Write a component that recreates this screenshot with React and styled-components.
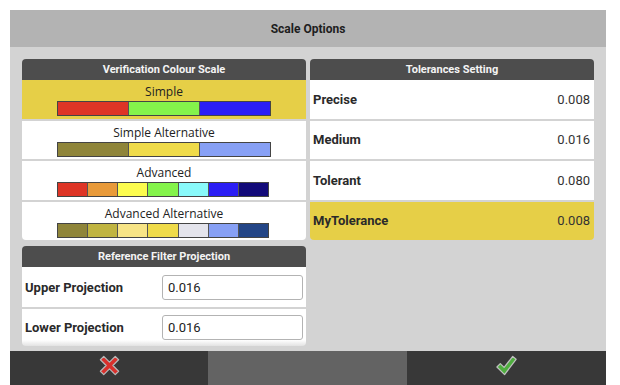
import React from 'react'
import styled, { createGlobalStyle } from 'styled-components'

const GlobalStyle = createGlobalStyle`
  html, body {
    margin:0;
    padding:0;
    background:#fff;
    overflow:hidden;
    font-family:Roboto, "Liberation Sans", sans-serif;
  }
`

const YELLOW = '#e6cf47'

const scales = [
  { name: 'Simple', colors: ['#de3526', '#84f34b', '#2b1ef5'], selected: true },
  { name: 'Simple Alternative', colors: ['#8f853a', '#efdb4a', '#87a0f5'] },
  { name: 'Advanced', colors: ['#de3526', '#e89a3a', '#fcfc4e', '#84f34b', '#89f9fa', '#2b1ef5', '#120a79'] },
  { name: 'Advanced Alternative', colors: ['#8f853a', '#c0b441', '#f7e486', '#efdb4a', '#e4e4ec', '#87a0f5', '#234586'] },
]

const tolerances = [
  { name: 'Precise', value: '0.008' },
  { name: 'Medium', value: '0.016' },
  { name: 'Tolerant', value: '0.080' },
  { name: 'MyTolerance', value: '0.008', selected: true },
]

const CrossIcon = () => (
  <svg width="23" height="23" viewBox="0 0 24 24">
    <path
      d="M6 2.5 L12 8.5 L18 2.5 L21.5 6 L15.5 12 L21.5 18 L18 21.5 L12 15.5 L6 21.5 L2.5 18 L8.5 12 L2.5 6 Z"
      fill="#d9302c"
      stroke="#b8b8b8"
      strokeWidth="1.3"
      strokeLinejoin="round"
    />
  </svg>
)

const CheckIcon = () => (
  <svg width="23" height="23" viewBox="0 0 24 24">
    <path
      d="M2 13.5 L5.5 10 L9.5 14 L18.5 2.5 L22 5.5 L10 21.5 Z"
      fill="#4fae3f"
      stroke="#c0c0c0"
      strokeWidth="1.3"
      strokeLinejoin="round"
    />
  </svg>
)

const App = () => {
  return (
    <>
      <GlobalStyle />
      <Page>
        <Dialog>
          <TitleBar>Scale Options</TitleBar>
          <Body>
            <Column>
              <Panel>
                <PanelHeader>Verification Colour Scale</PanelHeader>
                {scales.map((s) => (
                  <ScaleRow key={s.name} $selected={s.selected}>
                    <ScaleName>{s.name}</ScaleName>
                    <ColorBar $wide={s.colors.length === 3}>
                      {s.colors.map((c, i) => (
                        <Swatch key={i} style={{ background: c }} />
                      ))}
                    </ColorBar>
                  </ScaleRow>
                ))}
              </Panel>
              <Panel>
                <PanelHeader>Reference Filter Projection</PanelHeader>
                <FieldRow>
                  <FieldLabel>Upper Projection</FieldLabel>
                  <FieldInput defaultValue="0.016" />
                </FieldRow>
                <FieldRow $last>
                  <FieldLabel>Lower Projection</FieldLabel>
                  <FieldInput defaultValue="0.016" />
                </FieldRow>
              </Panel>
            </Column>
            <Column>
              <Panel>
                <PanelHeader>Tolerances Setting</PanelHeader>
                {tolerances.map((t) => (
                  <ToleranceRow key={t.name} $selected={t.selected}>
                    <TolName>{t.name}</TolName>
                    <TolValue>{t.value}</TolValue>
                  </ToleranceRow>
                ))}
              </Panel>
            </Column>
          </Body>
          <Footer>
            <FooterButton><CrossIcon /></FooterButton>
            <FooterButton $mid />
            <FooterButton><CheckIcon /></FooterButton>
          </Footer>
        </Dialog>
      </Page>
    </>
  )
}

export default App

const Page = styled.div`
  padding:10px 0 0 10px;
  width:596px;
`

const Dialog = styled.div`
  display:flex;
  flex-direction:column;
  width:596px;
`

const TitleBar = styled.div`
  height:37px;
  background:#b3b3b3;
  display:flex;
  align-items:center;
  justify-content:center;
  font-size:12px;
  font-weight:700;
  color:#1e1e1e;
`

const Body = styled.div`
  height:304px;
  box-sizing:border-box;
  background:#d3d3d3;
  padding:12px 12px 0 12px;
  display:grid;
  grid-template-columns:284px 284px;
  column-gap:4px;
  align-items:start;
  overflow:hidden;
`

const Column = styled.div`
  display:flex;
  flex-direction:column;
  gap:6px;
`

const Panel = styled.div`
  display:flex;
  flex-direction:column;
  gap:2px;
  border-radius:4px;
  overflow:hidden;
`

const PanelHeader = styled.div`
  height:21px;
  margin-bottom:-2px;
  background:#4d4d4d;
  color:#f4f4f4;
  font-size:11px;
  font-weight:700;
  display:flex;
  align-items:center;
  justify-content:center;
`

const ScaleRow = styled.div`
  height:38.5px;
  box-sizing:border-box;
  padding-top:3px;
  background:${(p) => (p.$selected ? YELLOW : '#fff')};
  display:flex;
  flex-direction:column;
  align-items:center;
`

const ScaleName = styled.div`
  font-family:"Open Sans", "Noto Sans", sans-serif;
  font-size:12px;
  line-height:17px;
  color:#222;
`

const ColorBar = styled.div`
  display:flex;
  width:${(p) => (p.$wide ? '214px' : '212px')};
  height:15px;
  margin-top:1px;
  box-sizing:border-box;
  border:1px solid #444;
  margin-left:${(p) => (p.$wide ? '0' : '-2px')};
`

const Swatch = styled.div`
  flex:1;
  & + & {
    border-left:1px solid #555;
  }
`

const ToleranceRow = styled.div`
  height:38.5px;
  box-sizing:border-box;
  padding:0 4px 0 3px;
  background:${(p) => (p.$selected ? YELLOW : '#fff')};
  display:flex;
  align-items:center;
  justify-content:space-between;
  color:#2a2a2a;
  font-size:13px;
`

const TolName = styled.span`
  font-weight:700;
`

const TolValue = styled.span`
  color:#333;
`

const FieldRow = styled.div`
  height:${(p) => (p.$last ? '37px' : '40px')};
  box-sizing:border-box;
  background:${(p) => (p.$last ? 'linear-gradient(#fff 0, #fff 31px, #e2e2e2 37px)' : '#fff')};
  display:flex;
  align-items:${(p) => (p.$last ? 'flex-start' : 'center')};
  padding:${(p) => (p.$last ? '6px 3px 0 3px' : '0 3px')};
`

const FieldLabel = styled.div`
  width:137px;
  font-size:13px;
  font-weight:700;
  color:#2a2a2a;
  line-height:25px;
`

const FieldInput = styled.input`
  width:141px;
  height:25px;
  box-sizing:border-box;
  border:1px solid #b3b3b3;
  border-radius:3px;
  padding:0 5px;
  font-family:Roboto, "Liberation Sans", sans-serif;
  font-size:13px;
  color:#222;
  outline:none;
`

const Footer = styled.div`
  height:40px;
  display:grid;
  grid-template-columns:198px 199px 199px;
`

const FooterButton = styled.div`
  background:${(p) => (p.$mid ? '#636363' : '#383838')};
  display:flex;
  justify-content:center;
  align-items:flex-start;
  padding-top:3px;
`
